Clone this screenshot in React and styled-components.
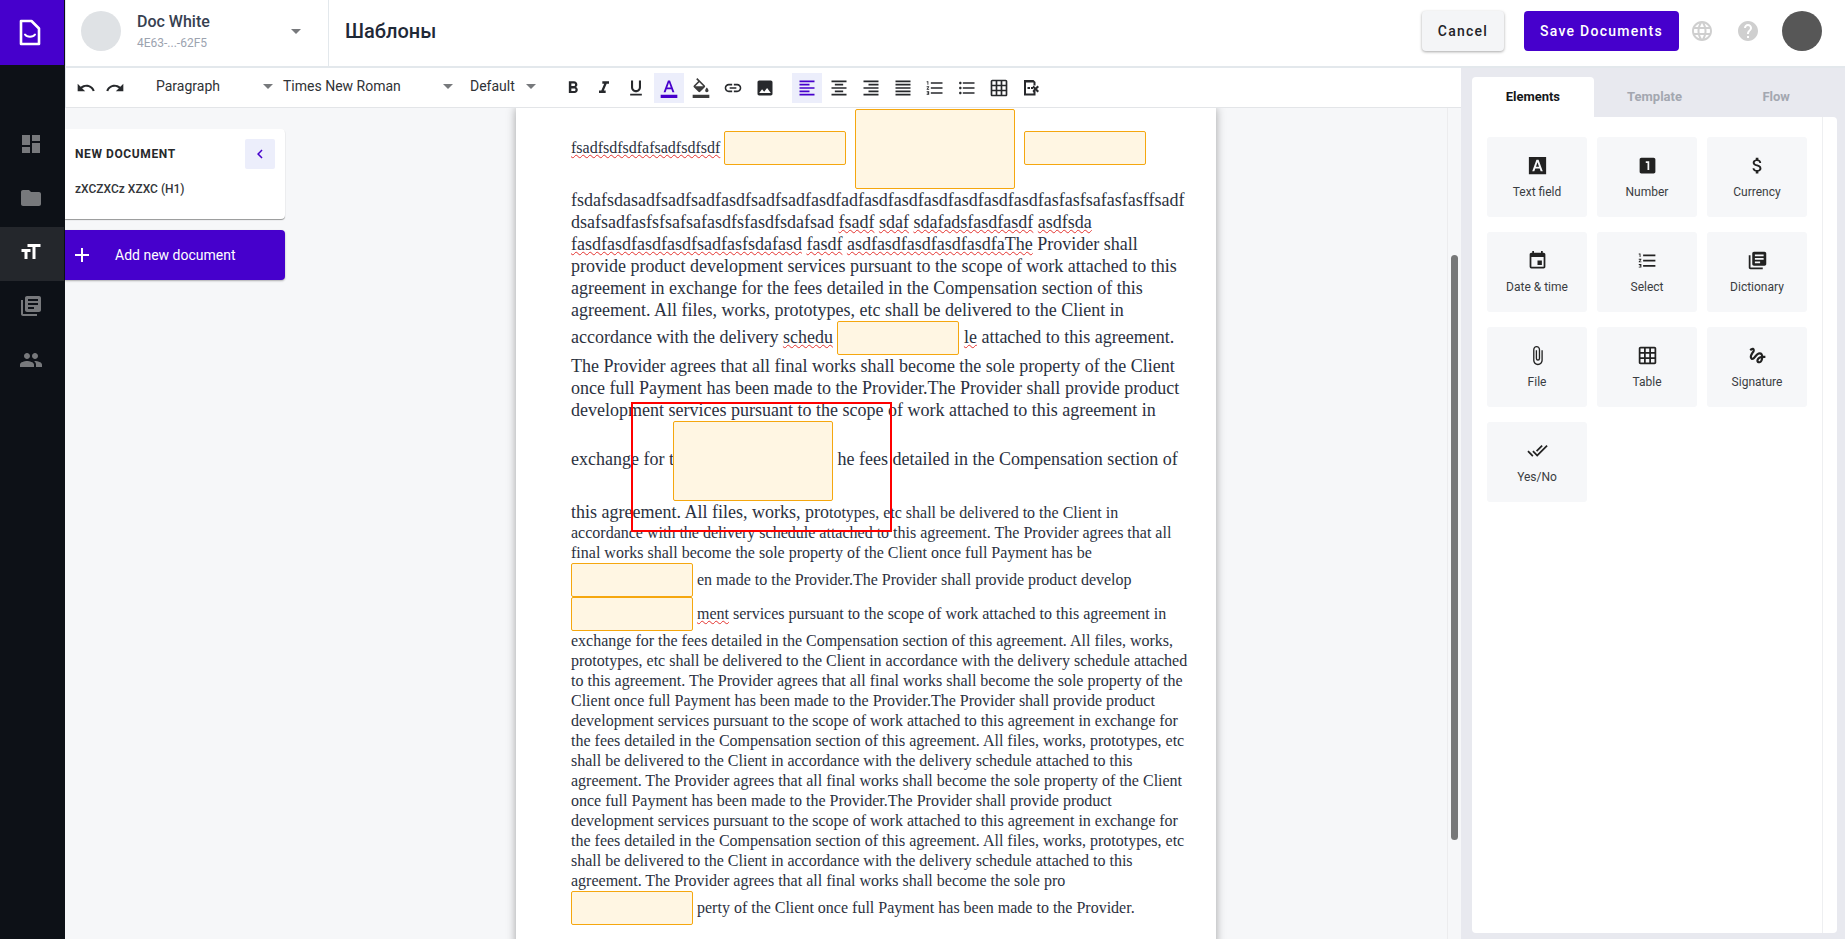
import React from 'react'
import styled, { createGlobalStyle } from 'styled-components'
import {
  MdDashboard, MdFolder, MdLibraryBooks, MdPeople, MdUndo, MdRedo,
  MdFormatBold, MdFormatItalic, MdFormatUnderlined, MdFormatColorText, MdOutlineFormatColorFill,
  MdLink, MdImage, MdFormatAlignLeft, MdFormatAlignCenter, MdFormatAlignRight, MdFormatAlignJustify,
  MdFormatListNumbered, MdFormatListBulleted, MdGridOn, MdArrowDropDown, MdChevronLeft, MdAdd,
  MdLooksOne, MdAttachMoney, MdEvent, MdAttachFile, MdDoneAll, MdLanguage, MdHelp, MdGesture,
} from 'react-icons/md'

const GlobalStyle = createGlobalStyle`
    html, body {
        margin: 0;
        height: 100%;
        overflow: hidden;
        font-family: Roboto, "Liberation Sans", sans-serif;
    }
`;

const Shell = styled.div`
    width: 1845px;
    height: 939px;
    display: flex;
    overflow: hidden;
    background: #f6f7f9;
`;

const Sidebar = styled.nav`
    width: 65px;
    flex: none;
    background: #0d1117;
    display: flex;
    flex-direction: column;
`;

const LogoBox = styled.div`
    height: 65px;
    margin-right: 1px;
    margin-bottom: 54px;
    padding-right: 4px;
    box-sizing: border-box;
    background: #4600cc;
    display: flex;
    align-items: center;
    justify-content: center;
`;

const NavItem = styled.div`
    height: 54px;
    margin-right: 1px;
    padding: 0 3px 4px 0;
    box-sizing: border-box;
    display: flex;
    align-items: center;
    justify-content: center;
    font-size: 24px;
    color: ${({ $active }) => ($active ? '#fff' : '#77797c')};
    background: ${({ $active }) => ($active ? '#24272c' : 'transparent')};
`;

const Main = styled.div`
    flex: 1;
    min-width: 0;
    display: flex;
    flex-direction: column;
`;

const Header = styled.header`
    height: 66px;
    flex: none;
    display: flex;
    background: #fff;
    border-bottom: 2px solid #e3e8ec;
`;

const OrgSwitch = styled.div`
    width: 264px;
    flex: none;
    box-sizing: border-box;
    padding: 0 20px 4px 15px;
    display: flex;
    align-items: center;
    border-right: 1px solid #e3e8ec;
    border-left: 1px solid #e3e8ec;
`;

const OrgAvatar = styled.div`
    width: 40px;
    height: 40px;
    border-radius: 50%;
    background: #dfe2e5;
    margin-right: 16px;
`;

const OrgText = styled.div`
    flex: 1;
`;

const OrgName = styled.div`
    font-size: 16px;
    font-weight: 500;
    line-height: 20px;
    color: #374151;
`;

const OrgId = styled.div`
    font-size: 12px;
    line-height: 16px;
    margin-top: 3px;
    color: #9ca3af;
`;

const Caret = styled(MdArrowDropDown)`
    font-size: 24px;
    color: #77797c;
    flex: none;
`;

const PageTitle = styled.h1`
    flex: 1;
    margin: 0;
    padding: 0 0 4px 16px;
    display: flex;
    align-items: center;
    font-size: 20px;
    font-weight: 500;
    color: #1f2937;
`;

const HeaderActions = styled.div`
    display: flex;
    align-items: center;
    padding: 0 23px 4px 0;
`;

const CancelButton = styled.button`
    width: 82px;
    height: 40px;
    border: 0;
    border-radius: 4px;
    background: #f4f5f7;
    box-shadow: 0 1px 3px rgba(0, 0, 0, 0.35);
    font: 500 14px Roboto, sans-serif;
    letter-spacing: 1.25px;
    color: #1f2328;
    margin-right: 20px;
`;

const SaveButton = styled.button`
    width: 155px;
    height: 40px;
    border: 0;
    border-radius: 4px;
    background: #4600cc;
    font: 500 14px Roboto, sans-serif;
    letter-spacing: 1.25px;
    color: #fff;
    margin-right: 11px;
`;

const HeaderIcon = styled.div`
    font-size: 24px;
    color: #cfcfcf;
    display: flex;
    margin-right: 22px;
`;

const UserAvatar = styled.div`
    width: 40px;
    height: 40px;
    border-radius: 50%;
    background: #575757;
`;

const Workspace = styled.div`
    flex: 1;
    min-height: 0;
    display: flex;
`;

const EditorColumn = styled.div`
    flex: 1;
    min-width: 0;
    display: flex;
    flex-direction: column;
`;

const Toolbar = styled.div`
    height: 40px;
    flex: none;
    box-sizing: border-box;
    display: flex;
    align-items: center;
    padding-left: 5px;
    background: #fff;
    border-bottom: 1px solid #e3e5e8;
    border-left: 1px solid #e3e8ec;
    color: #27292c;
`;

const ToolButton = styled.div`
    width: 30px;
    height: 30px;
    flex: none;
    margin-left: ${({ $gap }) => $gap || 0}px;
    display: flex;
    align-items: center;
    justify-content: center;
    font-size: 20px;
    background: ${({ $active }) => ($active ? '#eceefb' : 'transparent')};
    color: ${({ $tint }) => $tint || 'inherit'};
`;

const Select = styled.div`
    width: ${({ $width }) => $width}px;
    flex: none;
    box-sizing: border-box;
    display: flex;
    align-items: center;
    justify-content: space-between;
    font-size: 14px;
    color: #2f3236;
    margin-left: ${({ $gap }) => $gap || 0}px;
    margin-bottom: 4px;
    padding-right: ${({ $pad }) => $pad || 0}px;
`;

const EditorBody = styled.div`
    flex: 1;
    min-height: 0;
    display: flex;
`;

const DocPanel = styled.aside`
    width: 220px;
    flex: none;
    padding-top: 21px;
`;

const DocCard = styled.div`
    height: 90px;
    box-sizing: border-box;
    background: #fff;
    border-radius: 0 4px 4px 0;
    box-shadow: 0 1px 1px rgba(0, 0, 0, 0.4);
    padding: 10px 10px 0;
`;

const DocCardHead = styled.div`
    display: flex;
    align-items: center;
    justify-content: space-between;
`;

const DocCardTitle = styled.div`
    font-size: 12px;
    font-weight: 700;
    letter-spacing: 0.6px;
    color: #27292c;
`;

const BackButton = styled.div`
    width: 30px;
    height: 30px;
    border-radius: 2px;
    background: #eceefb;
    color: #4600cc;
    font-size: 18px;
    display: flex;
    align-items: center;
    justify-content: center;
`;

const DocRow = styled.div`
    margin-top: 13px;
    font-size: 12px;
    font-weight: 500;
    color: #33363a;
`;

const AddButton = styled.div`
    height: 50px;
    margin-top: 11px;
    display: flex;
    align-items: center;
    background: #4600cc;
    border-radius: 0 4px 4px 0;
    box-shadow: 0 1px 2px rgba(0, 0, 0, 0.3);
    color: #fff;
    font-size: 14px;
    padding-left: 5px;
    gap: 21px;
`;

const Canvas = styled.div`
    flex: 1;
    min-width: 0;
    display: flex;
    justify-content: center;
    padding-left: 2px;
    overflow: hidden;
    position: relative;
`;

const Page = styled.div`
    width: 700px;
    flex: none;
    height: 900px;
    box-sizing: border-box;
    padding: 1px 27px 0 55px;
    background: #fff;
    box-shadow: 0 0 9px rgba(0, 0, 0, 0.35);
    font-family: "Liberation Serif", "Times New Roman", serif;
    font-size: 16px;
    line-height: 20px;
    color: #2b3140;
    overflow-wrap: break-word;
`;

const Large = styled.span`
    font-size: 18px;
    line-height: 22px;
`;

const Wavy = styled.span`
    text-decoration: underline wavy #e4332f 1px;
    text-underline-offset: 1px;
`;

const Field = styled.span`
    display: inline-block;
    vertical-align: ${({ $big }) => ($big ? 'middle' : '-12.4px')};
    box-sizing: border-box;
    width: ${({ $big }) => ($big ? 160 : 122)}px;
    height: ${({ $big }) => ($big ? 80 : 34)}px;
    margin-left: ${({ $gap }) => $gap || 0}px;
    background: #fff6e3;
    border: 1px solid #f5a70f;
    border-radius: 2px;
`;

const Marquee = styled.div`
    position: absolute;
    left: 346px;
    top: 294px;
    width: 261px;
    height: 130px;
    box-sizing: border-box;
    border: 2px solid #f00;
    pointer-events: none;
`;

const ScrollTrack = styled.div`
    width: 14px;
    flex: none;
    box-sizing: border-box;
    padding: 147px 3px 0;
    border-left: 1px solid #ececee;
    margin-left: 2px;
`;

const ScrollThumb = styled.div`
    height: 585px;
    border-radius: 4px;
    background: #777879;
`;

const RightPanel = styled.aside`
    width: 384px;
    flex: none;
    box-sizing: border-box;
    padding: 9px 8px 6px 11px;
    background: #e8e9ef;
    display: flex;
    flex-direction: column;
`;

const Tabs = styled.div`
    display: flex;
    height: 40px;
    flex: none;
`;

const Tab = styled.div`
    width: 122px;
    padding-bottom: 1px;
    box-sizing: border-box;
    display: flex;
    align-items: center;
    justify-content: center;
    font-size: 13px;
    font-weight: 700;
    border-radius: 4px 4px 0 0;
    color: ${({ $active }) => ($active ? '#14171a' : '#a3a7b0')};
    background: ${({ $active }) => ($active ? '#fff' : 'transparent')};
`;

const PanelBody = styled.div`
    flex: 1;
    min-height: 0;
    display: flex;
    background: #fff;
    border-radius: 0 4px 4px 4px;
`;

const ElementGrid = styled.div`
    flex: 1;
    display: grid;
    grid-template-columns: repeat(3, 100px);
    grid-auto-rows: 80px;
    column-gap: 10px;
    row-gap: 15px;
    align-content: start;
    padding: 20px 0 0 15px;
`;

const PanelTrack = styled.div`
    width: 14px;
    flex: none;
    border-left: 1px solid #eeeff1;
`;

const ElementCard = styled.div`
    display: flex;
    flex-direction: column;
    align-items: center;
    background: #f6f7f9;
    border-radius: 3px;
    padding-top: 16px;
    box-sizing: border-box;
    font-size: 12px;
    color: #3a3d42;
`;

const ElementIcon = styled.div`
    height: 24px;
    font-size: 21px;
    color: #222;
    margin-bottom: 8px;
    display: flex;
    align-items: center;
    justify-content: center;
`;

const LogoIcon = () => (
  <svg width="22" height="27" viewBox="0 0 22 27">
    <path d="M2 2h10.500L20 9.500V25H2z" fill="none" stroke="#fff" strokeWidth="2.600" strokeLinejoin="round" />
    <path d="M6 15.500c2 3 8 3 10 0" fill="none" stroke="#fff" strokeWidth="2" strokeLinecap="round" />
  </svg>
)

// small T on the left, big T on the right
const TypeIcon = () => (
  <svg width="1em" height="1em" viewBox="0 0 24 24">
    <path fill="currentColor" d="M21.500 4v3h-5v12h-3V7h-5V4zM2.500 9h9v3h-3v7h-3v-7h-3z" />
  </svg>
)

const TextFieldIcon = () => (
  <svg width="23" height="23" viewBox="0 0 24 24">
    <path fill="currentColor" fillRule="evenodd" d="M3 3h18v18H3zM10.900 6L6.500 18h2.200l1-2.800h4.600l1 2.800h2.200L13.100 6zM10.400 13.300L12 8.700l1.600 4.600z" />
  </svg>
)

const PageExitIcon = () => (
  <svg width="20" height="20" viewBox="0 0 20 20">
    <path d="M3 2h9.500l2 2v3.500h-2V4.500H5v11h7.500V13h2v4.500H3z" fill="currentColor" />
    <path d="M6.500 9h2.500v2H6.500zM10 9h2v2h-2zM12.500 7.500l2 2 2-2 1.500 1.500-2 2 2 2-1.500 1.500-2-2-2 2-1-1.500 1.500-2-1.500-2z" fill="currentColor" />
  </svg>
)

const NAV = [MdDashboard, MdFolder, TypeIcon, MdLibraryBooks, MdPeople]

const ELEMENTS = [
  { label: 'Text field', Icon: TextFieldIcon },
  { label: 'Number', Icon: MdLooksOne },
  { label: 'Currency', Icon: MdAttachMoney },
  { label: 'Date & time', Icon: MdEvent },
  { label: 'Select', Icon: MdFormatListNumbered },
  { label: 'Dictionary', Icon: MdLibraryBooks },
  { label: 'File', Icon: MdAttachFile },
  { label: 'Table', Icon: MdGridOn },
  { label: 'Signature', Icon: MdGesture },
  { label: 'Yes/No', Icon: MdDoneAll },
]

const App = () => {
  return (
    <Shell>
      <GlobalStyle />
      <Sidebar>
        <LogoBox><LogoIcon /></LogoBox>
        {NAV.map((Icon, i) => (
          <NavItem key={i} $active={i === 2}><Icon /></NavItem>
        ))}
      </Sidebar>
      <Main>
        <Header>
          <OrgSwitch>
            <OrgAvatar />
            <OrgText>
              <OrgName>Doc White</OrgName>
              <OrgId>4E63-...-62F5</OrgId>
            </OrgText>
            <Caret />
          </OrgSwitch>
          <PageTitle>Шаблоны</PageTitle>
          <HeaderActions>
            <CancelButton>Cancel</CancelButton>
            <SaveButton>Save Documents</SaveButton>
            <HeaderIcon><MdLanguage /></HeaderIcon>
            <HeaderIcon><MdHelp /></HeaderIcon>
            <UserAvatar />
          </HeaderActions>
        </Header>
        <Workspace>
          <EditorColumn>
            <Toolbar>
              <ToolButton><MdUndo /></ToolButton>
              <ToolButton $gap={-1}><MdRedo /></ToolButton>
              <Select $width={127} $pad={3} $gap={26}>Paragraph<Caret /></Select>
              <Select $width={187} $pad={10}>Times New Roman<Caret /></Select>
              <Select $width={73}>Default<Caret /></Select>
              <ToolButton $gap={15}><MdFormatBold /></ToolButton>
              <ToolButton $gap={1}><MdFormatItalic /></ToolButton>
              <ToolButton $gap={2}><MdFormatUnderlined /></ToolButton>
              <ToolButton $gap={3} $active $tint="#4600cc"><MdFormatColorText /></ToolButton>
              <ToolButton $gap={2} $tint="#3c3c3c"><MdOutlineFormatColorFill /></ToolButton>
              <ToolButton $gap={2}><MdLink /></ToolButton>
              <ToolButton $gap={2}><MdImage /></ToolButton>
              <ToolButton $gap={12} $active $tint="#4600cc"><MdFormatAlignLeft /></ToolButton>
              <ToolButton $gap={2}><MdFormatAlignCenter /></ToolButton>
              <ToolButton $gap={2}><MdFormatAlignRight /></ToolButton>
              <ToolButton $gap={2}><MdFormatAlignJustify /></ToolButton>
              <ToolButton $gap={2}><MdFormatListNumbered /></ToolButton>
              <ToolButton $gap={2}><MdFormatListBulleted /></ToolButton>
              <ToolButton $gap={2}><MdGridOn /></ToolButton>
              <ToolButton $gap={2}><PageExitIcon /></ToolButton>
            </Toolbar>
            <EditorBody>
              <DocPanel>
                <DocCard>
                  <DocCardHead>
                    <DocCardTitle>NEW DOCUMENT</DocCardTitle>
                    <BackButton><MdChevronLeft /></BackButton>
                  </DocCardHead>
                  <DocRow>zXCZXCz XZXC (H1)</DocRow>
                </DocCard>
                <AddButton><MdAdd size={24} />Add new document</AddButton>
              </DocPanel>
              <Canvas>
                <Page>
                  <Wavy>fsadfsdfsdfafsadfsdfsdf</Wavy> <Field /> &nbsp;<Field $big $gap={1} /> &nbsp;<Field $gap={1} />
                  <br />
                  <Large>
                    fsdafsdasadfsadfsadfasdfsadfsadfasdfadfasdfasdfasdfasdfasdfasdfasfasfsafasfasffsadfdsafsadfasfsfsafsafasdfsfasdfsdafsad <Wavy>fsadf</Wavy> <Wavy>sdaf</Wavy> <Wavy>sdafadsfasdfasdf</Wavy> <Wavy>asdfsda</Wavy> <Wavy>fasdfasdfasdfasdfsadfasfsdafasd</Wavy> <Wavy>fasdf</Wavy> <Wavy>asdfasdfasdfasdfasdfaThe</Wavy> Provider shall provide product development services pursuant to the scope of work attached to this agreement in exchange for the fees detailed in the Compensation section of this agreement. All files, works, prototypes, etc shall be delivered to the Client in accordance with the delivery <Wavy>schedu</Wavy> <Field /> <Wavy>le</Wavy> attached to this agreement. The Provider agrees that all final works shall become the sole property of the Client once full Payment has been made to the Provider.The Provider shall provide product development services pursuant to the scope of work attached to this agreement in exchange for t<Field $big $gap={-1} /> he fees detailed in the Compensation section of this agreement. All files, works, pro
                  </Large>
                  totypes, etc shall be delivered to the Client in accordance with the delivery schedule attached to this agreement. The Provider agrees that all final works shall become the sole property of the Client once full Payment has be <Field /> en made to the Provider.The Provider shall provide product develop <Field /> <Wavy>ment</Wavy> services pursuant to the scope of work attached to this agreement in exchange for the fees detailed in the Compensation section of this agreement. All files, works, prototypes, etc shall be delivered to the Client in accordance with the delivery schedule attached to this agreement. The Provider agrees that all final works shall become the sole property of the Client once full Payment has been made to the Provider.The Provider shall provide product development services pursuant to the scope of work attached to this agreement in exchange for the fees detailed in the Compensation section of this agreement. All files, works, prototypes, etc shall be delivered to the Client in accordance with the delivery schedule attached to this agreement. The Provider agrees that all final works shall become the sole property of the Client once full Payment has been made to the Provider.The Provider shall provide product development services pursuant to the scope of work attached to this agreement in exchange for the fees detailed in the Compensation section of this agreement. All files, works, prototypes, etc shall be delivered to the Client in accordance with the delivery schedule attached to this agreement. The Provider agrees that all final works shall become the sole pro <Field /> perty of the Client once full Payment has been made to the Provider.
                </Page>
                <Marquee />
              </Canvas>
              <ScrollTrack><ScrollThumb /></ScrollTrack>
            </EditorBody>
          </EditorColumn>
          <RightPanel>
            <Tabs>
              <Tab $active>Elements</Tab>
              <Tab>Template</Tab>
              <Tab>Flow</Tab>
            </Tabs>
            <PanelBody>
              <ElementGrid>
                {ELEMENTS.map(({ label, Icon }) => (
                  <ElementCard key={label}>
                    <ElementIcon><Icon /></ElementIcon>
                    {label}
                  </ElementCard>
                ))}
              </ElementGrid>
              <PanelTrack />
            </PanelBody>
          </RightPanel>
        </Workspace>
      </Main>
    </Shell>
  )
}

export default App
